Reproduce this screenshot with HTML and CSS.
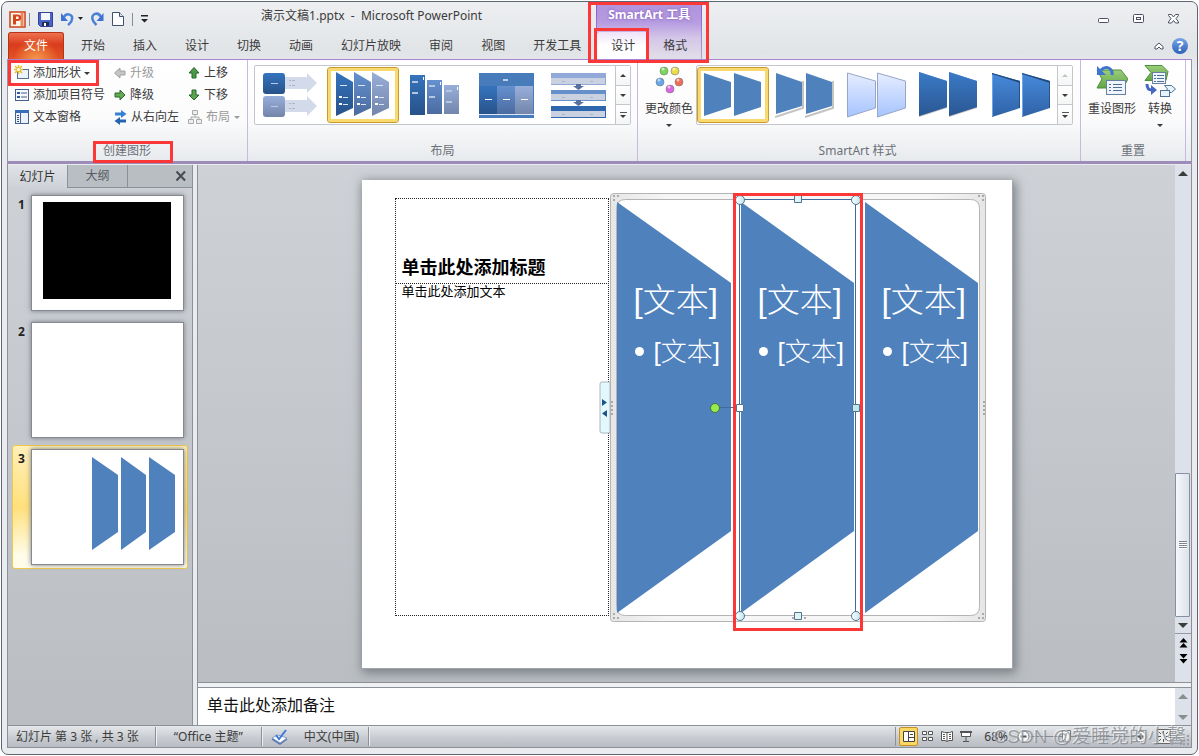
FILE: index.html
```html
<!DOCTYPE html>
<html lang="zh-CN">
<head>
<meta charset="utf-8">
<title>演示文稿1.pptx - Microsoft PowerPoint</title>
<link rel="stylesheet" href="styles.css">
</head>
<body>
<svg class="defs" aria-hidden="true">
  <defs>
    <linearGradient id="dark" x1="0" y1="0" x2="0" y2="1"><stop offset="0" stop-color="#3574bd"/><stop offset="1" stop-color="#28528a"/></linearGradient>
    <linearGradient id="mid" x1="0" y1="0" x2="0" y2="1"><stop offset="0" stop-color="#6591cf"/><stop offset="1" stop-color="#4b6ba0"/></linearGradient>
    <linearGradient id="light" x1="0" y1="0" x2="0" y2="1"><stop offset="0" stop-color="#98afdb"/><stop offset="1" stop-color="#7385aa"/></linearGradient>
    <linearGradient id="pale" x1="0" y1="0" x2="0" y2="1"><stop offset="0" stop-color="#e6edff"/><stop offset="1" stop-color="#a6c4ff"/></linearGradient>
    <linearGradient id="bevel" x1="0" y1="0" x2="0" y2="1"><stop offset="0" stop-color="#478adb"/><stop offset="1" stop-color="#2f62a6"/></linearGradient>
    <linearGradient id="leaf" x1="0" y1="0" x2="0" y2="1"><stop offset="0" stop-color="#9ccd7d"/><stop offset="1" stop-color="#62a644"/></linearGradient>
    <linearGradient id="handle" x1="0" y1="0" x2="1" y2="0"><stop offset="0" stop-color="#fff"/><stop offset="1" stop-color="#bfe6ee"/></linearGradient>
    <linearGradient id="frame" x1="0" y1="0" x2="1" y2="0"><stop offset="0" stop-color="#e6e6e6"/><stop offset=".15" stop-color="#f6f6f6"/><stop offset=".85" stop-color="#f6f6f6"/><stop offset="1" stop-color="#e6e6e6"/></linearGradient>
  </defs>
</svg>
<div class="window">
  <header class="header">
    <div class="header-left">
      <div class="titlebar">
        <div class="quick">
          <svg class="logo" width="17" height="17" viewBox="0 0 17 17"><rect x="1" y="1" width="15" height="15" fill="#fff3ea" stroke="#c9421c" stroke-width="1.500"/><path d="M13 2v13" stroke="#e88b61" stroke-width="3"/><path d="M4 3.500h4.500c5 0 5 6.500 0 6.500H7v3.500H4zM7 5.500V8h1.500c1.800 0 1.800-2.500 0-2.500z" fill="#d5451b" fill-rule="evenodd"/></svg>
          <span class="quick-line"></span>
          <button class="tool" aria-label="保存"><svg width="15" height="15" viewBox="0 0 15 15"><path d="M.5.5h14v14h-12l-2-2z" fill="#4a63c4" stroke="#33439a"/><path d="M3 1h9v7H3z" fill="#f2f6fc"/><path d="M4 10h7v4H4z" fill="#222b50"/><path d="M6 11h2v3H6z" fill="#fff"/></svg></button>
          <button class="tool" aria-label="撤消"><svg width="22" height="14" viewBox="0 0 22 14"><path d="M3 5c3-5 9-2 8 2 0 3-2 4-4 6" fill="none" stroke="#4a80d6" stroke-width="2.500"/><path d="M0 1v8h7z" fill="#3d74d4"/><path d="M17 5h5l-2.500 3z" fill="#222"/></svg></button>
          <button class="tool" aria-label="恢复"><svg width="13" height="14" viewBox="0 0 13 14"><path d="M10 5C7-1 0 2 1.500 7c.5 3 2 4 4 6" fill="none" stroke="#4a80d6" stroke-width="2.500"/><path d="M12.500 1v8h-7z" fill="#3d74d4"/></svg></button>
          <button class="tool" aria-label="新建"><svg width="12" height="14" viewBox="0 0 12 14"><path d="M.5.5h7l4 4v9H.5z" fill="#fff" stroke="#3e5170"/><path d="M7.500.5v4h4" fill="#d8e3f2" stroke="#3e5170"/></svg></button>
          <span class="quick-line"></span>
          <button class="tool" aria-label="自定义快速访问工具栏"><svg width="7" height="8" viewBox="0 0 7 8"><path d="M0 0h7v1.500H0zM0 4h7L3.500 7.500z" fill="#222"/></svg></button>
        </div>
        <h1 class="title">演示文稿1.pptx&nbsp; -&nbsp; Microsoft PowerPoint</h1>
      </div>
      <nav class="tabs">
        <button class="tab tab-file">文件</button>
        <button class="tab">开始</button><button class="tab">插入</button><button class="tab">设计</button><button class="tab">切换</button><button class="tab">动画</button><button class="tab">幻灯片放映</button><button class="tab">审阅</button><button class="tab">视图</button><button class="tab">开发工具</button>
      </nav>
    </div>
    <div class="context mark mark-context">
      <div class="context-title">SmartArt 工具</div>
      <div class="tabs">
        <button class="tab tab-active mark mark-tab">设计</button><button class="tab">格式</button>
      </div>
    </div>
    <div class="header-right">
      <div class="window-buttons">
        <button class="tool" aria-label="最小化"><svg width="12" height="12" viewBox="0 0 12 12"><rect x=".5" y="5.500" width="10" height="4" rx="1" fill="#fff" stroke="#4d5064"/></svg></button>
        <button class="tool" aria-label="还原"><svg width="12" height="12" viewBox="0 0 12 12"><rect x=".5" y="1.500" width="10" height="8" rx="1" fill="#fff" stroke="#4d5064"/><rect x="3.500" y="4.500" width="4" height="2" fill="#fff" stroke="#4d5064"/></svg></button>
        <button class="tool" aria-label="关闭"><svg width="12" height="12" viewBox="0 0 12 12"><path d="M.5 1.500h3L5.500 4l2-2.500h3v1L8 5.500 10.500 9v1h-3L5.500 7.500l-2 2.500h-3V9L3 5.500.5 2.500z" fill="#fff" stroke="#4d5064"/></svg></button>
      </div>
      <div class="help-buttons">
        <button class="tool" aria-label="功能区最小化"><svg width="10" height="8" viewBox="0 0 10 8"><path d="M1 4.500l4-3.500 4 3.500V7H7L5 5 3 7H1z" fill="#fff" stroke="#4d5064"/></svg></button>
        <button class="help" aria-label="帮助">?</button>
      </div>
    </div>
  </header>

  <section class="ribbon">
    <div class="group group-create">
      <div class="commands">
        <button class="command mark mark-add"><svg width="16" height="16" viewBox="0 0 16 16"><rect x="3.500" y="4.500" width="11" height="9" fill="#edf3fc" stroke="#577093"/><path d="M4.500 0v9M0 4.500h9M1 1l7 7M8 1L1 8" stroke="#e7bd2c" stroke-width="1.500"/><circle cx="4.500" cy="4.500" r="1.500" fill="#fff"/></svg>添加形状<i class="caret"></i></button>
        <button class="command off"><svg width="12" height="12" viewBox="0 0 12 12"><path d="M.5 6L6 1v3h5v4H6v3z" fill="#c5c5c5" stroke="#a0a0a0"/></svg>升级</button>
        <button class="command"><svg width="12" height="12" viewBox="0 0 12 12"><path d="M6 .5L1 6h3v5h4V6h3z" fill="#4c9a48" stroke="#24652a"/></svg>上移</button>
        <button class="command"><svg width="16" height="16" viewBox="0 0 16 16"><rect x="1.500" y="2.500" width="13" height="11" fill="#f5f9ff" stroke="#46618a"/><path d="M7 6h6M7 10h6" stroke="#4a5b77"/><path d="M3 5h3v2H3zM3 9h3v2H3z" fill="#2d57a7"/></svg>添加项目符号</button>
        <button class="command"><svg width="12" height="12" viewBox="0 0 12 12"><path d="M11 6L6 1v3H1v4h5v3z" fill="#65a951" stroke="#2b682e"/></svg>降级</button>
        <button class="command"><svg width="12" height="12" viewBox="0 0 12 12"><path d="M6 11L1 6h3V1h4v5h3z" fill="#5ca650" stroke="#24652a"/></svg>下移</button>
        <button class="command"><svg width="16" height="16" viewBox="0 0 16 16"><rect x="1.500" y="1.500" width="13" height="13" fill="#eaf1fc" stroke="#46618a"/><path d="M1 1h14v3H1z" fill="#386dba"/><path d="M3 6.500h2M3 8.500h2M3 10.500h2M3 12.500h2" stroke="#3c5170"/><path d="M6.500 4v10" stroke="#46618a"/></svg>文本窗格</button>
        <button class="command"><svg width="13" height="15" viewBox="0 0 13 15"><path d="M1 2.500h6V0l5.500 4L7 8V5.500H1z" fill="#3480d2"/><path d="M12 9.500H6V7L.5 11 6 15v-2.500h6z" fill="#2664ad"/></svg>从右向左</button>
        <button class="command off"><svg width="14" height="14" viewBox="0 0 14 14" fill="#eee" stroke="#aaa"><path d="M4.500.5h5v4h-5zM.5 9.500h5v4h-5zM8.500 9.500h5v4h-5zM7 5v2M3 9V7h8v2"/></svg>布局<i class="caret"></i></button>
      </div>
      <h2 class="group-name"><span class="mark mark-name">创建图形</span></h2>
    </div>

    <div class="group">
      <div class="gallery">
        <button class="pick" aria-label="垂直箭头列表"><svg width="56" height="46" viewBox="0 0 56 46"><path d="M21 5h23V1l10 10-10 10v-4H21zM21 28h23v-4l10 10-10 10v-4H21z" fill="#d3dbea"/><rect x="0" y="1" width="22" height="21" rx="3" fill="url(#dark)"/><rect x="0" y="24" width="22" height="21" rx="3" fill="url(#light)"/><path d="M8 11.500h7M8 34.500h7" stroke="#b9cbe6"/><path d="M26 8.500h2M29 8.500h3M26 13.500h2M29 13.500h3M26 31.500h2M29 31.500h3M26 36.500h2M29 36.500h3" stroke="#a9b3c9"/></svg></button>
        <button class="pick picked" aria-label="梯形列表"><svg width="56" height="46" viewBox="0 0 56 46"><path d="M1 0l17 10v26L1 44z" fill="url(#dark)"/><path d="M19 0l17 10v26L19 44z" fill="url(#mid)"/><path d="M37 0l17 10v26L37 44z" fill="url(#light)"/><path d="M5 13.500h7M23 13.500h7M41 13.500h7M8 25.500h5M26 25.500h5M44 25.500h5M8 32.500h5M26 32.500h5M44 32.500h5" stroke="#dbe5f3"/><path d="M4 25h3M22 25h3M40 25h3M4 32h3M22 32h3M40 32h3" stroke="#fff" stroke-width="2"/></svg></button>
        <button class="pick" aria-label="递减列表"><svg width="56" height="46" viewBox="0 0 56 46"><path d="M3 3h15v40H3z" fill="url(#dark)"/><path d="M20 8h15v34H20z" fill="url(#mid)"/><path d="M37 13h15v29H37z" fill="url(#light)"/><path d="M5 10h6M5 21h6M22 14h6M22 25h6M39 19h6M39 30h6" stroke="#b5c6e0" stroke-width="2"/><path d="M16.500 5v3M33.500 10v3M50.500 15v3" stroke="#fff"/></svg></button>
        <button class="pick" aria-label="表格列表"><svg width="56" height="46" viewBox="0 0 56 46"><path d="M0 1h55v45H0z" fill="#487bb9"/><path d="M0 14h18v28H0z" fill="url(#dark)"/><path d="M18 14h18v28H18z" fill="url(#mid)"/><path d="M36 14h18v28H36z" fill="url(#light)"/><path d="M0 42.500h55" stroke="#dce7f5"/><path d="M6 27.500h7M24 27.500h7M42 27.500h7" stroke="#fff" /><path d="M24 8h5" stroke="#bfd0e8" stroke-width="2"/></svg></button>
        <button class="pick" aria-label="分段流程"><svg width="56" height="46" viewBox="0 0 56 46"><path d="M0 1h55v12H0z" fill="#91a9d8"/><path d="M0 18h55v11H0z" fill="#6590ca"/><path d="M0 34h55v12H0z" fill="#2e67ad"/><path d="M0 6h54v6H0zM0 22h54v6H0zM0 39h54v6H0z" fill="#cad2e1"/><path d="M25 12h5v2h3l-5.500 4-5.500-4h3zM25 28h5v2h3l-5.500 4-5.500-4h3z" fill="#5870a0"/><path d="M11 9.500h3M39 9.500h3M11 25.500h3M39 25.500h3M11 42.500h3M39 42.500h3" stroke="#a9b3c9"/></svg></button>
        <div class="scrolls">
          <button class="scroll" aria-label="上一行"><i class="up"></i></button>
          <button class="scroll" aria-label="下一行"><i class="caret"></i></button>
          <button class="scroll more" aria-label="其他"><i class="caret"></i></button>
        </div>
      </div>
      <h2 class="group-name">布局</h2>
    </div>

    <div class="group group-styles">
      <div class="row">
        <button class="big"><svg width="32" height="32" viewBox="0 0 32 32" stroke="#777" stroke-width=".6"><circle cx="11" cy="6" r="4" fill="#77d959"/><circle cx="22" cy="6" r="4" fill="#ecdc45"/><circle cx="7" cy="17" r="4" fill="#63a7ee"/><circle cx="26" cy="17" r="4" fill="#ef6e59"/><circle cx="17" cy="24" r="4" fill="#db65e4"/><g fill="#fff" stroke="none" opacity=".6"><circle cx="10" cy="4" r="1.500"/><circle cx="21" cy="4" r="1.500"/><circle cx="6" cy="15" r="1.500"/><circle cx="25" cy="15" r="1.500"/><circle cx="16" cy="22" r="1.500"/></g></svg>更改颜色<i class="caret"></i></button>
        <div class="gallery">
          <button class="pick picked" aria-label="简单填充"><svg width="60" height="46" viewBox="0 0 60 46"><path d="M1 1l27 9v25L1 44zM31 1l27 9v25l-27 9z" fill="#4f81bd"/></svg></button>
          <button class="pick" aria-label="白色轮廓"><svg width="60" height="46" viewBox="0 0 60 46"><path d="M0 45l28-9V9M30 45l28-9V9" fill="none" stroke="#c4c4c4" stroke-width="2"/><path d="M1 1l26 9v24L1 42zM31 1l26 9v24l-26 8z" fill="#4f81bd"/></svg></button>
          <button class="pick" aria-label="细微效果"><svg width="60" height="46" viewBox="0 0 60 46"><path d="M.5 1l28 8v27l-28 9zM30.500 1l28 8v27l-28 9z" fill="url(#pale)" stroke="#98a6c4"/></svg></button>
          <button class="pick" aria-label="中等效果"><svg width="60" height="46" viewBox="0 0 60 46"><path d="M0 1l28 9v26L0 45zM30 1l28 9v26l-28 9z" fill="#bbb"/><path d="M0 0l28 9v26L0 44zM30 0l28 9v26l-28 9z" fill="url(#bevel)"/><path d="M0 0l28 9v26L0 44zM30 0l28 9v26l-28 9z" fill="url(#dark)" opacity=".7"/></svg></button>
          <button class="pick" aria-label="强烈效果"><svg width="60" height="46" viewBox="0 0 60 46"><path d="M1 1l28 8v27L1 45zM31 1l28 8v27l-28 9z" fill="url(#bevel)"/><path d="M1 1l28 8v2L1 2zM31 1l28 8v2L31 2z" fill="#204879"/><path d="M1.500 3v41M31.500 3v41" stroke="#6ba5ea"/><path d="M28.500 10v26M58.500 10v26" stroke="#275488"/></svg></button>
          <div class="scrolls">
            <button class="scroll off" aria-label="上一行"><i class="up"></i></button>
            <button class="scroll" aria-label="下一行"><i class="caret"></i></button>
            <button class="scroll more" aria-label="其他"><i class="caret"></i></button>
          </div>
        </div>
      </div>
      <h2 class="group-name">SmartArt 样式</h2>
    </div>

    <div class="group group-reset">
      <div class="row">
        <button class="big"><svg width="32" height="32" viewBox="0 0 32 32"><path d="M1 5h24l7 9-5 9H1l5-9z" fill="url(#leaf)" stroke="#4d8e39"/><rect x="10.500" y="15.500" width="19" height="14" fill="#eef5fc" stroke="#65819f"/><path d="M13 19.500h2M17 19.500h9M13 22.500h2M17 22.500h9M13 25.500h2M17 25.500h9" stroke="#4d6d95"/><path d="M5 5c5-5 12-2 11 5" fill="none" stroke="#3f74cf" stroke-width="3"/><path d="M1 1v9h9z" fill="#3f74cf"/></svg>重设图形</button>
        <button class="big"><svg width="32" height="32" viewBox="0 0 32 32"><path d="M1 .5h17l6 6-2 9H1l6-8z" fill="url(#leaf)" stroke="#4d8e39"/><rect x="8.500" y="7.500" width="13" height="11" fill="#eef5fc" stroke="#65819f"/><path d="M10 10.500h2M13 10.500h7M10 13.500h2M13 13.500h7M10 16.500h2M13 16.500h7" stroke="#4d6d95"/><path d="M3 19c0 5 2 6 5 6" fill="none" stroke="#4468c4" stroke-width="3"/><path d="M7 20l6 5-6 5z" fill="#4468c4"/><path d="M20.500 20.500h7l4 3.500-4 3.500h-7l3-3.500z" fill="#e7f3fc" stroke="#527391"/><rect x="16.500" y="25.500" width="9" height="6" fill="#e7f3fc" stroke="#527391"/></svg>转换<i class="caret"></i></button>
      </div>
      <h2 class="group-name">重置</h2>
    </div>
  </section>

  <main class="work">
    <aside class="side">
      <div class="side-tabs">
        <button class="side-tab side-active">幻灯片</button><button class="side-tab">大纲</button>
        <button class="side-close" aria-label="关闭窗格"><svg width="12" height="12" viewBox="0 0 12 12"><path d="M1.500 1.500l8.500 9M10 1.500l-8.500 9" stroke="#444b53" stroke-width="2"/></svg></button>
      </div>
      <ol class="slides">
        <li class="item"><span class="number">1</span><div class="thumb"><div class="black"></div></div></li>
        <li class="item"><span class="number">2</span><div class="thumb"></div></li>
        <li class="item chosen"><span class="number">3</span><div class="thumb"><svg width="151" height="114" viewBox="0 0 151 114"><path d="M60 7l26 18v57L60 100zM89 7l25 18v57l-25 18zM117 7l26 18v57l-26 18z" fill="#4f81bd"/></svg></div></li>
      </ol>
    </aside>

    <div class="main">
      <div class="stage-row">
        <div class="stage">
          <div class="slide">
            <div class="holder holder-title"><p class="slide-title">单击此处添加标题</p></div>
            <div class="holder holder-body"><p class="slide-body">单击此处添加文本</p></div>
            <svg class="art" width="650" height="488" viewBox="0 0 650 488">
              <path d="M248 202h-8q-2 0-2 2v47q0 2 2 2h8z" fill="#e2f8fc" stroke="#aab4bc"/>
              <path d="M240 219v7l5-3.500zM245 230v7l-5-3.500z" fill="#1d5487"/>
              <path d="M251.500 13.500h369q3 0 3 3v422q0 3-3 3h-369q-3 0-3-3v-422q0-3 3-3zM263.500 19.500q-9 0-9 9v398q0 9 9 9h345q9 0 9-9v-398q0-9-9-9z" fill="url(#frame)" fill-rule="evenodd" stroke="#b4b4b4"/>
              <path d="M251 16h6M251 20h2M616 16h6M620 20h2M251 438h6M251 434h2M616 438h6M620 434h2M430 438h14M250 221v14M622 221v14" stroke="#aaa" stroke-width="2" stroke-dasharray="2 2"/>
              <path d="M255 22l114 81v248l-114 82zM379 22l113 81v248l-113 82zM503 22l113 81v248l-113 82z" fill="#4f81bd"/>
              <path d="M378.500 19.500h115v417M377.500 19v417M354 227.500h20" fill="none" stroke="#426b99"/>
              <g fill="url(#handle)" stroke="#4f7790"><circle cx="378" cy="20" r="4.500"/><circle cx="494" cy="20" r="4.500"/><circle cx="378" cy="436" r="4.500"/><circle cx="494" cy="436" r="4.500"/><path d="M432.500 15.500h7v7h-7zM432.500 432.500h7v7h-7zM374.500 224.500h7v7h-7zM490.500 224.500h7v7h-7z"/></g>
              <circle cx="353" cy="228" r="4.500" fill="#95ee47" stroke="#4b6a50"/>
            </svg>
            <div class="shapes">
              <div class="shape"><p class="head">[文本]</p><p class="bullet">[文本]</p></div>
              <div class="shape mark mark-shape"><p class="head">[文本]</p><p class="bullet">[文本]</p></div>
              <div class="shape"><p class="head">[文本]</p><p class="bullet">[文本]</p></div>
            </div>
          </div>
        </div>
        <div class="bar">
          <button class="bar-button" aria-label="向上滚动"><i class="up wide"></i></button>
          <div class="track"><div class="grab"><i class="ridges"></i></div></div>
          <button class="bar-button" aria-label="向下滚动"><i class="down wide"></i></button>
          <div class="pagers">
            <button class="tool" aria-label="上一张幻灯片"><svg width="9" height="10" viewBox="0 0 9 10"><path d="M4.500 0L8.500 4.500H.5zM4.500 5L8.500 9.500H.5z" fill="#000"/></svg></button>
            <button class="tool" aria-label="下一张幻灯片"><svg width="9" height="10" viewBox="0 0 9 10"><path d="M4.500 4.500L8.500 0H.5zM4.500 9.500L8.500 5H.5z" fill="#000"/></svg></button>
          </div>
        </div>
      </div>
      <div class="notes-row">
        <textarea class="notes" aria-label="备注">单击此处添加备注</textarea>
        <div class="bar bar-notes">
          <button class="bar-button" aria-label="备注向上滚动"><i class="up wide dim"></i></button>
          <button class="bar-button" aria-label="备注向下滚动"><i class="down wide dim"></i></button>
        </div>
      </div>
    </div>
  </main>

  <footer class="status">
    <span class="cell">幻灯片 第 3 张 , 共 3 张</span>
    <span class="cell cell-theme">“Office 主题”</span>
    <span class="cell cell-lang"><svg width="17" height="16" viewBox="0 0 17 16"><path d="M1 9l6-3 9 3-7 5z" fill="#fff" stroke="#8ba3cc"/><path d="M1 10l8 5 7-5" fill="none" stroke="#5b7ab8" stroke-width="1.500"/><path d="M5 6l3 4 7-9" fill="none" stroke="#3f7ada" stroke-width="2"/></svg>中文(中国)</span>
    <div class="views">
      <button class="view view-on" aria-label="普通视图"><svg width="12" height="11" viewBox="0 0 12 11" fill="#fff" stroke="#444"><path d="M.5.5h11v10H.5zM5.500.5v10M5.500 6.500h6M7 3.500h3"/></svg></button>
      <button class="view" aria-label="幻灯片浏览"><svg width="12" height="11" viewBox="0 0 12 11" fill="#fff" stroke="#555"><path d="M.5.5h4v3h-4zM6.500.5h4v3h-4zM.5 6.500h4v3h-4zM6.500 6.500h4v3h-4z"/></svg></button>
      <button class="view" aria-label="阅读视图"><svg width="12" height="11" viewBox="0 0 12 11" fill="#fff" stroke="#555"><path d="M.5.500l3 1 2.500 0 2.500 0 3-1v9H8L6 10.500 4 9.500H.5zM6 2v8M2 3.500h2M2 5.500h2M2 7.500h2M8 3.500h2M8 5.500h2M8 7.500h2"/></svg></button>
      <button class="view" aria-label="幻灯片放映"><svg width="12" height="11" viewBox="0 0 12 11" fill="#fff" stroke="#555"><path d="M0 1h12" stroke-width="2"/><path d="M1.500 2v3.500h9V2M6 6v4M3 10.500h6"/></svg></button>
    </div>
    <span class="zoom-value">68%</span>
    <button class="round" aria-label="缩小"><svg width="13" height="13" viewBox="0 0 13 13"><circle cx="6.500" cy="6.500" r="5.500" fill="#f5f6f7" stroke="#777d84"/><path d="M3.500 6.500h6" stroke="#555" stroke-width="2"/></svg></button>
    <input class="slider" type="range" min="0" max="100" value="34" aria-label="缩放级别">
    <button class="round" aria-label="放大"><svg width="13" height="13" viewBox="0 0 13 13"><circle cx="6.500" cy="6.500" r="5.500" fill="#f5f6f7" stroke="#777d84"/><path d="M3.500 6.500h6M6.500 3.500v6" stroke="#555" stroke-width="2"/></svg></button>
    <button class="round fit" aria-label="适应窗口"><svg width="15" height="15" viewBox="0 0 15 15"><rect x=".5" y=".5" width="14" height="14" fill="#eee" stroke="#666"/><path d="M7.500 2v3M7.500 10v3M2 7.500h3M10 7.500h3M3 3l2 2M12 3l-2 2M3 12l2-2M12 12l-2-2" stroke="#555"/></svg></button>
    <svg class="grip" width="10" height="12" viewBox="0 0 10 12"><path d="M7 1h2v2H7zM7 5h2v2H7zM3 5h2v2H3zM7 9h2v2H7zM3 9h2v2H3zM0 9h1v2H0z" fill="#9aa0ab"/></svg>
    <span class="watermark">CSDN @爱睡觉的小馨</span>
  </footer>
</div>
</body>
</html>
```
FILE: styles.css
```css
* { box-sizing: border-box; }
body {
  margin: 0;
  height: 100vh;
  padding: 1px;
  background: #fff;
  color: #3b3b3b;
  font: 12px/16px "Noto Sans", "Noto Sans CJK SC", sans-serif;
}
button {
  margin: 0;
  padding: 0;
  border: 0;
  background: none;
  color: inherit;
  font: inherit;
  white-space: nowrap;
}
svg { display: block; flex: none; }
h1, h2, p, ol { margin: 0; padding: 0; font: inherit; }
.defs { position: absolute; width: 0; height: 0; }

.window {
  display: flex;
  flex-direction: column;
  height: 100%;
  padding: 0 5px 6px;
  border: 1px solid #5f6673;
  border-radius: 7px;
  background: linear-gradient(#edeff1, #e1e4e7 50px, #eaebef 70px);
}

/* annotation boxes */
.mark { position: relative; }
.mark::after {
  content: "";
  position: absolute;
  z-index: 3;
  border: 3px solid #fc3737;
  pointer-events: none;
}
.mark-context::after { inset: 0 -8px -4px -9px; }
.mark-tab::after { inset: -4px 0 -4px -3px; }
.mark-add::after { inset: -2px -9px -2px -6px; }
.mark-name::after { inset: -2px -22px -4px -10px; }
.mark-shape::after { inset: -9px -8px -18px -8px; }

/* title bar and tabs */
.header { display: flex; height: 58px; border-bottom: 1px solid #a984d3; }
.header-left { display: flex; flex-direction: column; padding-left: 1px; }
.titlebar { display: flex; flex: 1; align-items: center; padding-top: 4px; }
.quick { display: flex; align-items: center; gap: 8px; padding-left: 1px; }
.logo { margin-right: -5px; }
.tool { display: flex; align-items: center; justify-content: center; }
.quick-line { width: 1px; height: 13px; background: #888d94; }
.title { flex: 1; text-align: center; padding-bottom: 6px; }
.tabs { display: flex; height: 27px; }
.tab { padding: 0 14px; }
.tab-file {
  margin-right: 3px;
  padding: 0 15px;
  border: 1px solid #b43415;
  border-bottom: 0;
  border-radius: 3px 3px 0 0;
  background: radial-gradient(ellipse at 50% 110%, #f59d4d, transparent 60%), linear-gradient(#ee7250, #d93c1c 45%, #e25325);
  color: #fff;
}
.context {
  display: flex;
  flex-direction: column;
  margin-left: 1px;
  border: solid #8f5fce;
  border-width: 0 1px;
  border-image: linear-gradient(#8a4fd0, #b7a0d8) 1;
  background: linear-gradient(#b193dc, #b59be0 20px, #d4c6e8 36px, #e1e0e8);
}
.context-title {
  flex: 1;
  padding: 5px 8px 0;
  color: #fff;
  font-weight: bold;
  text-shadow: 0 0 3px #7a50b5;
  text-align: center;
}
.tab-active {
  border-radius: 3px 3px 0 0;
  background: linear-gradient(#eee2f8, #fff 14px);
}
.header-right { display: flex; flex: 1; flex-direction: column; align-items: flex-end; }
.window-buttons { display: flex; flex: 1; gap: 23px; padding: 4px 12px 0 0; }
.help-buttons { display: flex; align-items: center; gap: 8px; height: 27px; padding-right: 4px; }
.help {
  width: 16px;
  height: 16px;
  border-radius: 50%;
  background: linear-gradient(#78a6e6, #2d60b8);
  color: #fff;
  font-weight: bold;
  font-size: 14px;
}

/* ribbon */
.ribbon {
  display: flex;
  height: 104px;
  border-left: 1px solid #9299a3;
  border-right: 1px solid #9299a3;
  border-bottom: 3px solid #9d8cba;
  background: linear-gradient(#fff, #fbfbfc 60px, #e7eaed);
}
.group {
  display: flex;
  flex-direction: column;
  padding: 2px 6px 0;
  border-right: 1px solid #c8b8e4;
}
.group-create { padding-right: 7px; }
.group-name { margin-top: auto; padding-bottom: 2px; color: #6c7078; text-align: center; }
.group-name span { display: inline-block; }
.commands {
  display: grid;
  grid-template-columns: auto auto auto;
  grid-auto-rows: 22px;
  column-gap: 9px;
}
.command { display: flex; align-items: center; gap: 4px; justify-self: start; }
.command:nth-child(3n+1) { gap: 3px; }
.off { color: #9a9a9a; }
.caret, .up, .down { width: 0; height: 0; border: 3px solid transparent; flex: none; }
.caret, .down { border-top-color: currentColor; border-bottom: 0; }
.up { border-bottom-color: currentColor; border-top: 0; }
.wide { border-left-width: 5px; border-right-width: 5px; }
.up.wide { border-bottom-width: 5px; }
.down.wide { border-top-width: 5px; }
.dim { color: #85918f; }
.row { display: flex; }
.group-styles { padding-left: 4px; padding-right: 7px; }
.group-reset { padding: 2px 4px 0; }
.gallery {
  display: flex;
  height: 60px;
  margin-top: 3px;
  border: 1px solid #c3c6cb;
  border-radius: 2px;
  background: #fff;
}
.pick {
  display: flex;
  align-items: center;
  justify-content: center;
  width: 72px;
  margin: 1px 0;
  border: 1px solid transparent;
  border-radius: 3px;
}
.picked {
  border-color: #c89a31;
  box-shadow: inset 0 0 0 3px #f9da6e;
}
.scrolls { display: flex; flex-direction: column; width: 15px; border-left: 1px solid #c3c6cb; }
.scroll {
  display: flex;
  flex: 1;
  flex-direction: column;
  align-items: center;
  justify-content: center;
  background: linear-gradient(#fff, #f4f5f6);
}
.scroll.off { color: #c4c4c4; }
.scroll + .scroll { border-top: 1px solid #c3c6cb; }
.more { gap: 2px; }
.more::before { content: ""; width: 7px; height: 1px; background: #555; }
.big {
  display: flex;
  flex-direction: column;
  align-items: center;
  align-self: flex-start;
  gap: 4px;
  padding: 3px;
}
.group-reset .big + .big { padding: 3px 5px; }
.big .caret { margin-top: 3px; }

/* slide list */
.work { display: flex; flex: 1; min-height: 0; border: solid #8b9199; border-width: 0 1px; padding-top: 1px; }
.side {
  display: flex;
  flex-direction: column;
  width: 185px;
  border-right: 1px solid #8b9199;
  background: linear-gradient(#ced2d7, #babec2);
}
.side-tabs { display: flex; height: 23px; border-bottom: 1px solid #8b9199; background: #b9bec3; }
.side-tab { width: 60px; border-right: 1px solid #8b9199; color: #555b64; }
.side-active { height: 23px; background: linear-gradient(#dfe2e6, #ced2d7); color: #333; }
.side-close { margin: auto 5px auto auto; }
.slides { display: flex; flex-direction: column; gap: 3px; padding: 3px 4px; list-style: none; }
.item {
  display: flex;
  justify-content: space-between;
  padding: 3px;
  border: 1px solid transparent;
  border-radius: 3px;
}
.chosen { border-color: #efc84d; background: linear-gradient(#fff0b9, #ffe07c 50%, #fffdea 90%); }
.number { padding: 2px 0 0 2px; color: #222; font-weight: bold; }
.thumb {
  width: 153px;
  height: 116px;
  border: 1px solid #858991;
  background: #fff;
  box-shadow: 0 0 5px #777b80;
}
.black { width: 128px; height: 97px; margin: 6px 11px; background: #000; }

/* editing area */
.main { display: flex; flex: 1; flex-direction: column; min-width: 0; margin-left: 4px; border-left: 1px solid #8b9199; }
.stage-row { display: flex; flex: 1; min-height: 0; border-bottom: 1px solid #8b9199; }
.stage {
  display: flex;
  flex: 1;
  align-items: center;
  justify-content: center;
  min-width: 0;
  background: linear-gradient(#ced2d7, #babec2);
}
.slide {
  position: relative;
  flex: none;
  width: 650px;
  height: 488px;
  background: #fff;
  box-shadow: 1px 1px 0 #a1a6ae, 2px 3px 10px 2px #797e84;
  font-family: "Liberation Sans", "Noto Sans CJK SC", sans-serif;
}
.holder { position: absolute; left: 33px; width: 214px; border: 1px dotted #222; color: #000; }
.holder-title { display: flex; align-items: flex-end; top: 18px; height: 86px; padding: 0 6px 3px; }
.holder-body { top: 103px; height: 333px; padding: 0 6px; }
.slide-title { font-size: 18px; line-height: 24px; font-weight: bold; }
.slide-body { font-size: 13px; line-height: 16px; }
.art { position: absolute; left: 0; top: 0; }
.shapes {
  position: absolute;
  left: 255px;
  top: 22px;
  display: grid;
  grid-template-columns: repeat(3, 114px);
  gap: 10px;
  height: 411px;
  color: #fff;
  font-weight: 300;
}
.shape { display: flex; flex-direction: column; padding-top: 76px; padding-left: 17px; white-space: nowrap; }
.head { font-size: 33px; line-height: 46px; }
.bullet { display: flex; align-items: center; gap: 10px; margin-top: 8px; font-size: 26px; line-height: 40px; }
.bullet::before { content: ""; width: 9px; height: 9px; margin-left: 1px; border-radius: 50%; background: #fff; }

.bar { display: flex; flex-direction: column; width: 16px; background: #dce1ea; }
.bar-button { display: flex; align-items: center; justify-content: center; height: 16px; }
.track { display: flex; flex: 1; flex-direction: column; justify-content: flex-end; }
.grab {
  display: flex;
  align-items: center;
  justify-content: center;
  height: 33%;
  margin-right: 1px;
  border: 1px solid #8790a0;
  border-radius: 1px;
  background: linear-gradient(90deg, #f5f7fa, #dde1e9);
}
.ridges { width: 8px; height: 8px; background: repeating-linear-gradient(#7d848e 0 1px, #fff 1px 2px); }
.pagers {
  display: flex;
  flex-direction: column;
  align-items: center;
  gap: 6px;
  height: 49px;
  padding-top: 4px;
  border-top: 1px solid #9299a3;
}
.notes-row { display: flex; height: 42px; border-top: 4px solid #f0f1f3; }
.notes {
  flex: 1;
  min-width: 0;
  margin: 0;
  padding: 5px 9px;
  border: 0;
  border-top: 1px solid #8b9199;
  background: #fff;
  color: #111;
  font: 16px/22px "Noto Sans CJK SC", sans-serif;
  resize: none;
  overflow: hidden;
}
.bar-notes { justify-content: space-between; border-top: 1px solid #8b9199; }

/* status bar */
.status {
  position: relative;
  display: flex;
  align-items: center;
  height: 23px;
  border: 1px solid #8b9199;
  background: linear-gradient(#e5e7ea, #c6cacf 60%, #b9bdc3);
}
.cell { display: flex; align-items: center; height: 19px; padding: 0 16px 0 8px; border-right: 1px solid #8b9199; box-shadow: 1px 0 0 #eef0f2; }
.cell-theme { padding: 0 18px; }
.cell-lang { gap: 16px; padding: 0 9px; }
.views { display: flex; align-items: center; height: 19px; margin-left: auto; padding-left: 3px; border-left: 1px solid #8b9199; }
.view { display: flex; align-items: center; justify-content: center; width: 19px; height: 19px; }
.view-on { border: 1px solid #c39124; border-radius: 2px; background: #fbd764; }
.zoom-value { padding: 0 9px; }
.slider {
  appearance: none;
  width: 104px;
  height: 14px;
  margin: 0;
  background: linear-gradient(#858b94, #858b94) center / 100% 1px no-repeat;
}
.slider::-webkit-slider-thumb {
  appearance: none;
  width: 9px;
  height: 13px;
  border: 1px solid #777d84;
  border-radius: 1px 1px 5px 5px;
  background: #f3f4f5;
}
.fit { margin-left: 9px; }
.grip { align-self: flex-end; margin: 0 1px 1px 9px; }
.watermark {
  position: absolute;
  right: 5px;
  top: -3px;
  color: rgba(130, 134, 140, .75);
  font: 19px/28px "Liberation Sans", "Noto Sans CJK SC", sans-serif;
  text-shadow: -1px -1px 0 rgba(255, 255, 255, .6);
  white-space: nowrap;
}
```
